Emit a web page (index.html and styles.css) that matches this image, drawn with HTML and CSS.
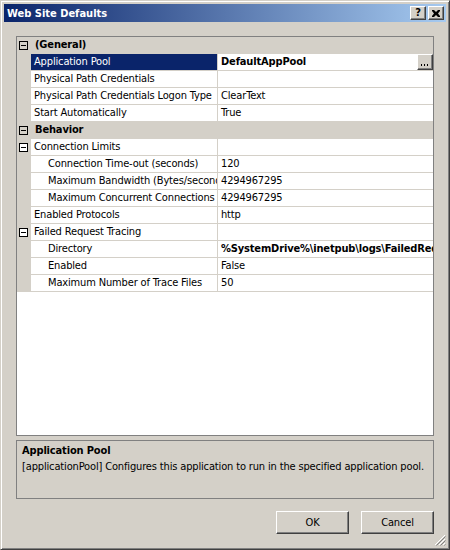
FILE: index.html
```html
<!DOCTYPE html>
<html>
<head>
<meta charset="utf-8">
<link rel="stylesheet" href="styles.css">
</head>
<body>
<div class="window">
  <div class="titlebar">
    <span class="title">Web Site Defaults</span>
    <div class="tbtns">
      <span class="tbtn tq">?</span>
      <span class="tbtn"><svg width="8" height="7" viewBox="0 0 8 7"><path d="M0 0h2l2 2 2-2h2v1l-2 2.5 2 2.5v1h-2l-2-2-2 2h-2v-1l2-2.5-2-2.5z" fill="#000"/></svg></span>
    </div>
  </div>
  <div class="content">
    <div class="grid">
      <div class="row cat"><span class="gut"><span class="box"></span></span><span class="cname">(General)</span></div>
      <div class="row"><span class="gut"></span><span class="name sel">Application Pool</span><span class="val"><span class="vtext b">DefaultAppPool</span><span class="dots"><svg width="9" height="3" viewBox="0 0 9 3"><rect x="0" y="0" width="1" height="2" fill="#000"/><rect x="3" y="0" width="1" height="2" fill="#000"/><rect x="6" y="0" width="1" height="2" fill="#000"/></svg></span></span></div>
      <div class="row"><span class="gut"></span><span class="name">Physical Path Credentials</span><span class="val"></span></div>
      <div class="row"><span class="gut"></span><span class="name">Physical Path Credentials Logon Type</span><span class="val"><span class="vtext">ClearText</span></span></div>
      <div class="row"><span class="gut"></span><span class="name">Start Automatically</span><span class="val"><span class="vtext">True</span></span></div>
      <div class="row cat"><span class="gut"><span class="box"></span></span><span class="cname">Behavior</span></div>
      <div class="row"><span class="gut"><span class="box"></span></span><span class="name">Connection Limits</span><span class="val"></span></div>
      <div class="row"><span class="gut"></span><span class="name sub">Connection Time-out (seconds)</span><span class="val"><span class="vtext">120</span></span></div>
      <div class="row"><span class="gut"></span><span class="name sub">Maximum Bandwidth (Bytes/second)</span><span class="val"><span class="vtext">4294967295</span></span></div>
      <div class="row"><span class="gut"></span><span class="name sub">Maximum Concurrent Connections</span><span class="val"><span class="vtext">4294967295</span></span></div>
      <div class="row"><span class="gut"></span><span class="name">Enabled Protocols</span><span class="val"><span class="vtext">http</span></span></div>
      <div class="row"><span class="gut"><span class="box"></span></span><span class="name">Failed Request Tracing</span><span class="val"></span></div>
      <div class="row"><span class="gut"></span><span class="name sub">Directory</span><span class="val"><span class="vtext b">%SystemDrive%\inetpub\logs\FailedReqLogFiles</span></span></div>
      <div class="row"><span class="gut"></span><span class="name sub">Enabled</span><span class="val"><span class="vtext">False</span></span></div>
      <div class="row"><span class="gut"></span><span class="name sub">Maximum Number of Trace Files</span><span class="val"><span class="vtext">50</span></span></div>
      <div class="blank"></div>
    </div>
    <div class="desc">
      <div class="dtitle">Application Pool</div>
      <div class="dtext">[applicationPool] Configures this application to run in the specified application pool.</div>
    </div>
    <div class="actions">
      <span class="btn">OK</span>
      <span class="btn">Cancel</span>
    </div>
  </div>
  <svg class="grip" width="12" height="12" viewBox="0 0 12 12">
    <path d="M11 1L1 11M11 5L5 11M11 9L9 11" stroke="#fff" stroke-width="1"/>
    <path d="M11.5 2.5L2.5 11.5M11.5 6.5L6.5 11.5M11.5 10.5L10.5 11.5" stroke="#808080" stroke-width="1"/>
  </svg>
</div>
</body>
</html>
```
FILE: styles.css
```css
html, body {
  margin: 0;
  padding: 0;
  background: #d4d0c8;
}
.window {
  position: relative;
  width: 450px;
  height: 550px;
  box-sizing: border-box;
  background: #d4d0c8;
  border: 1px solid;
  border-color: #d4d0c8 #404040 #404040 #d4d0c8;
  box-shadow: inset 1px 1px 0 #ffffff, inset -1px -1px 0 #808080;
  padding: 3px;
  display: flex;
  flex-direction: column;
  font-family: "DejaVu Sans Condensed", "DejaVu Sans", sans-serif;
  font-size: 11px;
  color: #000;
}
.titlebar {
  height: 18px;
  flex: none;
  display: flex;
  align-items: center;
  background: linear-gradient(to right, #0a246a, #a6caf0);
  padding: 0 2px 0 2px;
}
.title {
  flex: 1;
  color: #fff;
  font-weight: bold;
  padding-left: 1px;
}
.tbtns {
  display: flex;
  gap: 2px;
}
.tbtn {
  width: 16px;
  height: 14px;
  box-sizing: border-box;
  background: #d4d0c8;
  border: 1px solid;
  border-color: #fff #404040 #404040 #fff;
  box-shadow: inset -1px -1px 0 #808080;
  display: flex;
  align-items: center;
  justify-content: center;
  font-weight: bold;
  font-size: 11px;
  line-height: 12px;
}
.content {
  flex: 1;
  display: flex;
  flex-direction: column;
  padding: 14px 12px 0 12px;
  letter-spacing: -0.15px;
}
.grid {
  height: 400px;
  box-sizing: border-box;
  border: 1px solid #808080;
  background: #fff;
  display: flex;
  flex-direction: column;
  overflow: hidden;
}
.row {
  height: 17px;
  flex: none;
  box-sizing: border-box;
  border-bottom: 1px solid #d4d0c8;
  display: flex;
  line-height: 16px;
  white-space: nowrap;
}
.row.cat {
  background: #d4d0c8;
}
.gut {
  width: 14px;
  flex: none;
  background: #d4d0c8;
  position: relative;
}
.box {
  position: absolute;
  left: 2px;
  top: 4px;
  width: 9px;
  height: 9px;
  box-sizing: border-box;
  border: 1px solid #000;
  background: #fff;
}
.box::after {
  content: "";
  position: absolute;
  left: 1px;
  top: 3px;
  width: 5px;
  height: 1px;
  background: #000;
}
.row.cat .box {
  background: #d4d0c8;
}
.cname {
  font-weight: bold;
  padding-left: 4px;
}
.name {
  width: 187px;
  flex: none;
  box-sizing: border-box;
  padding-left: 3px;
  overflow: hidden;
  border-right: 1px solid #d4d0c8;
}
.name.sub {
  padding-left: 17px;
}
.name.sel {
  background: #0a246a;
  color: #fff;
  background-clip: padding-box;
}
.val {
  flex: 1;
  min-width: 0;
  display: flex;
  overflow: hidden;
}
.vtext {
  flex: 1;
  padding-left: 3px;
  overflow: hidden;
}
.b {
  font-weight: bold;
}
.dots {
  width: 16px;
  height: 16px;
  flex: none;
  box-sizing: border-box;
  background: #d4d0c8;
  border: 1px solid;
  border-color: #fff #404040 #404040 #fff;
  box-shadow: inset -1px -1px 0 #808080;
  display: flex;
  align-items: flex-end;
  justify-content: center;
  padding-bottom: 2px;
}
.dots svg {
  display: block;
}
.blank {
  flex: 1;
  background: #fff;
}
.desc {
  margin-top: 4px;
  height: 59px;
  box-sizing: border-box;
  border: 1px solid #808080;
  padding: 2px 5px;
  line-height: 16px;
  white-space: nowrap;
  overflow: hidden;
}
.dtitle {
  font-weight: bold;
}
.actions {
  margin-top: 12px;
  display: flex;
  justify-content: flex-end;
  gap: 12px;
}
.btn {
  width: 73px;
  height: 23px;
  box-sizing: border-box;
  border: 1px solid;
  border-color: #fff #404040 #404040 #fff;
  box-shadow: inset -1px -1px 0 #808080;
  display: flex;
  align-items: center;
  justify-content: center;
}
.grip {
  position: absolute;
  right: 3px;
  bottom: 3px;
}
```
